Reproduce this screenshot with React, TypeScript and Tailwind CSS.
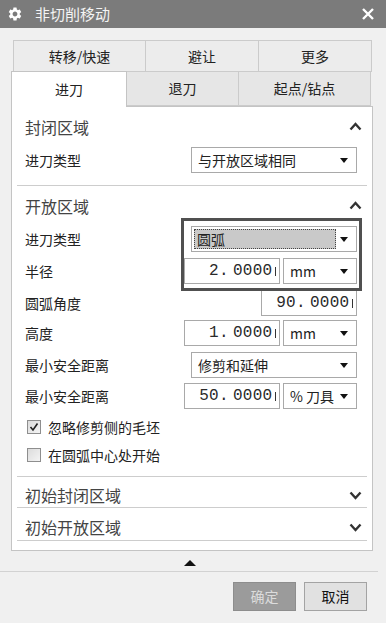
import { MdSettings } from 'react-icons/md';

const Caret = () => (
  <span className="w-0 h-0 border-l-[4.5px] border-r-[4.5px] border-t-[5px] border-l-transparent border-r-transparent border-t-[#111]" />
);

const Chevron = ({ up }: { up?: boolean }) => (
  <svg width="13" height="9" viewBox="0 0 13 9" className="mr-[10px]">
    <polyline
      points={up ? '1.5,7.5 6.5,2 11.5,7.5' : '1.5,1.5 6.5,7 11.5,1.5'}
      fill="none"
      stroke="#333"
      strokeWidth="2.4"
    />
  </svg>
);

const Select = ({ text, w, className = '' }: { text: string; w: string; className?: string }) => (
  <div className={`${w} h-[26px] border border-[#a9a9a9] bg-white flex items-center justify-between pl-[6px] pr-[8px] text-[14px] text-[#222] ${className}`}>
    <span>{text}</span>
    <Caret />
  </div>
);

const NumInput = ({ value, w }: { value: string; w: string }) => {
  const [int, frac] = value.split('.');
  return (
    <div className={`${w} h-[26px] border border-[#a9a9a9] bg-white flex items-center justify-end pr-[3px] overflow-hidden`}>
      <span className="font-['Liberation_Mono',monospace] text-[16px] text-[#2a2a2a] tracking-[0.3px]">
        {int}
        <span className="mr-[4px]">.</span>
        {frac}
      </span>
      <span className="ml-[2px] w-[1.5px] h-[9px] bg-[#333]" />
    </div>
  );
};

const Row = ({ label, children }: { label: string; children: React.ReactNode }) => (
  <div className="flex items-center justify-between pl-[13px] pr-[15px]">
    <span className="text-[14px] text-[#222]">{label}</span>
    <div className="flex gap-[3px]">{children}</div>
  </div>
);

const Header = ({ title, up, className }: { title: string; up?: boolean; className: string }) => (
  <div className={`flex items-center justify-between pl-[13px] ${className}`}>
    <span className="text-[16px] text-[#444]">{title}</span>
    <Chevron up={up} />
  </div>
);

const Sep = ({ className = '' }: { className?: string }) => (
  <div className={`mx-[5px] h-px bg-[#cdcdcd] ${className}`} />
);

const Check = ({ checked, label, className }: { checked?: boolean; label: string; className: string }) => (
  <div className={`flex items-center pl-[15px] ${className}`}>
    <span className="w-[14px] h-[14px] border border-[#8e8e8e] bg-gradient-to-br from-[#dcdcdc] to-[#f4f4f4] flex items-center justify-center">
      {checked && (
        <svg width="10" height="10" viewBox="0 0 10 10">
          <polyline points="1.5,5 4,8 8.5,1.5" fill="none" stroke="#222" strokeWidth="1.6" />
        </svg>
      )}
    </span>
    <span className="ml-[7px] text-[14px] text-[#222]">{label}</span>
  </div>
);

export default function App() {
  return (
    <div className="w-[386px] h-[623px] bg-[#f0f0f0] font-['Noto_Sans_CJK_SC',sans-serif] flex flex-col overflow-hidden">
      {/* title bar */}
      <div className="h-[28px] bg-[#7b7b7b] flex items-center justify-between pl-[7px] pr-[11px] text-white">
        <div className="flex items-center">
          <MdSettings size={16} />
          <span className="ml-[12px] text-[15px] text-[#f4f4f4]">非切削移动</span>
        </div>
        <svg width="14" height="14" viewBox="0 0 14 14">
          <path d="M2 2 L12 12 M12 2 L2 12" stroke="white" strokeWidth="2.4" />
        </svg>
      </div>

      <div className="mx-[11px] w-[362px] mt-[12px]">
        {/* tabs */}
        <div className="ml-[2px] w-[359px] h-[32px] flex text-[14px] text-[#222]">
          <div className="w-[133px] border border-[#cbcbcb] bg-[#ececec] flex items-center justify-center">转移/快速</div>
          <div className="w-[113px] border-y border-r border-[#cbcbcb] bg-[#ececec] flex items-center justify-center">避让</div>
          <div className="flex-1 border-y border-r border-[#cbcbcb] bg-[#ececec] flex items-center justify-center">更多</div>
        </div>
        <div className="h-[34px] flex text-[14px] text-[#222] relative">
          <div className="w-[116px] h-[36px] -mt-[1px] border-x border-t border-[#c4c4c4] bg-white flex items-center justify-center relative z-10">进刀</div>
          <div className="w-[112px] border-r border-b border-[#cbcbcb] bg-[#e6e6e6] flex items-center justify-center">退刀</div>
          <div className="w-[132px] border-r border-b border-[#cbcbcb] bg-[#e6e6e6] flex items-center justify-center">起点/钻点</div>
        </div>

        {/* panel */}
        <div className="relative border border-[#c4c4c4] bg-white pb-[9px]">
          <Header title="封闭区域" up className="h-[39px]" />
          <div className="mt-[1px]">
            <Row label="进刀类型">
              <Select text="与开放区域相同" w="w-[166px]" />
            </Row>
          </div>
          <Sep className="mt-[12px]" />
          <Header title="开放区域" up className="h-[39px]" />
          <div className="mt-[1px]">
            <Row label="进刀类型">
              <div className="w-[166px] h-[26px] border border-[#a9a9a9] bg-white flex items-center justify-between pl-[2px] pr-[8px]">
                <span className="w-[142px] h-[20px] bg-[#c9c9c9] border border-dotted border-[#444] flex items-center pl-[2px] text-[14px] text-[#222]">圆弧</span>
                <Caret />
              </div>
            </Row>
          </div>
          <div className="mt-[6px]">
            <Row label="半径">
              <NumInput value="2.0000" w="w-[96px]" />
              <Select text="mm" w="w-[74px]" />
            </Row>
          </div>
          <div className="mt-[6px]">
            <Row label="圆弧角度">
              <NumInput value="90.0000" w="w-[96px]" />
            </Row>
          </div>
          <div className="mt-[4px]">
            <Row label="高度">
              <NumInput value="1.0000" w="w-[96px]" />
              <Select text="mm" w="w-[74px]" />
            </Row>
          </div>
          <div className="mt-[6px]">
            <Row label="最小安全距离">
              <Select text="修剪和延伸" w="w-[166px]" />
            </Row>
          </div>
          <div className="mt-[5px]">
            <Row label="最小安全距离">
              <NumInput value="50.0000" w="w-[96px]" />
              <Select text="% 刀具" w="w-[74px]" className="pl-[5px] pr-[6px]" />
            </Row>
          </div>
          <Check checked label="忽略修剪侧的毛坯" className="mt-[11px] h-[14px]" />
          <Check label="在圆弧中心处开始" className="mt-[14px] h-[14px]" />
          <Sep className="mt-[14px]" />
          <Header title="初始封闭区域" className="h-[30px] pt-[6px]" />
          <Sep />
          <Header title="初始开放区域" className="h-[32px] pt-[6px]" />
          <Sep />

          {/* highlight frame */}
          <div className="absolute left-[169px] top-[111px] w-[181px] h-[73px] border-[3px] border-[#505050] pointer-events-none" />
        </div>
      </div>

      {/* footer */}
      <div className="flex justify-center mt-[9px] pr-[6px]">
        <span className="w-0 h-0 border-l-[6px] border-r-[6px] border-b-[6px] border-l-transparent border-r-transparent border-b-[#111]" />
      </div>
      <div className="mt-[5px] w-[378px] h-px bg-[#d2d2d2]" />
      <div className="mt-[10px] flex justify-end gap-[8px] pr-[19px]">
        <div className="w-[63px] h-[29px] bg-[#9b9b9b] border border-[#8d8d8d] flex items-center justify-center text-[14px] text-[#dcdcdc]">确定</div>
        <div className="w-[63px] h-[29px] bg-[#e1e1e1] border border-[#a3a3a3] flex items-center justify-center text-[14px] text-[#111]">取消</div>
      </div>
    </div>
  );
}
